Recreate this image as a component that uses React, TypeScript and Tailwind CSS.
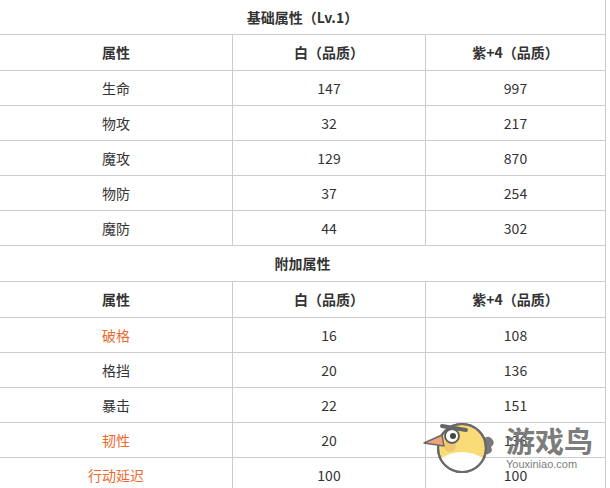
import React from "react";

type Row = { name: string; w: string; p: string; orange?: boolean };

const base: Row[] = [
  { name: "生命", w: "147", p: "997" },
  { name: "物攻", w: "32", p: "217" },
  { name: "魔攻", w: "129", p: "870" },
  { name: "物防", w: "37", p: "254" },
  { name: "魔防", w: "44", p: "302" },
];

const extra: Row[] = [
  { name: "破格", w: "16", p: "108", orange: true },
  { name: "格挡", w: "20", p: "136" },
  { name: "暴击", w: "22", p: "151" },
  { name: "韧性", w: "20", p: "136", orange: true },
  { name: "行动延迟", w: "100", p: "100", orange: true },
];

function Title({ text, h }: { text: string; h: string }) {
  return (
    <div className={`${h} border-b border-[#cccccc] flex items-center justify-center font-bold`}>
      {text}
    </div>
  );
}

function Header() {
  return (
    <div className="h-[36px] border-b border-[#cccccc] grid grid-cols-[233px_193px_1fr] font-bold">
      <div className="border-r border-[#cccccc] flex items-center justify-center">属性</div>
      <div className="border-r border-[#cccccc] flex items-center justify-center">白（品质）</div>
      <div className="flex items-center justify-center">紫+4（品质）</div>
    </div>
  );
}

function DataRow({ r }: { r: Row }) {
  return (
    <div className="h-[35px] border-b border-[#cccccc] grid grid-cols-[233px_193px_1fr]">
      <div
        className={`border-r border-[#cccccc] flex items-center justify-center ${
          r.orange ? "text-[#ec6a2c]" : ""
        }`}
      >
        {r.name}
      </div>
      <div className="border-r border-[#cccccc] flex items-center justify-center">{r.w}</div>
      <div className="flex items-center justify-center">{r.p}</div>
    </div>
  );
}

function Watermark() {
  return (
    <div className="absolute left-[420px] top-[418px] flex items-start opacity-90 pointer-events-none">
      <svg width="80" height="60" viewBox="0 0 80 60">
        {/* tail */}
        <path d="M62 22 q6 -6 10 -1 q4 4 -1 8 q3 5 -3 7 q-4 1 -7 -3 z" fill="#6a6a6a" />
        {/* body */}
        <circle cx="42" cy="30" r="24" fill="#f9d96a" stroke="#5a5a5a" strokeWidth="2.2" />
        {/* belly */}
        <path d="M21 40 q21 -12 42 0 q-6 13 -21 13 q-15 0 -21 -13 z" fill="#ffffff" />
        <circle cx="42" cy="30" r="24" fill="none" stroke="#5a5a5a" strokeWidth="2.2" />
        {/* cheek */}
        <circle cx="30" cy="28" r="6" fill="#e8b860" opacity="0.7" />
        {/* beak */}
        <path d="M22 17 L4 25 L24 28 z" fill="#f0986a" stroke="#5a5a5a" strokeWidth="1.4" strokeLinejoin="round" />
        {/* eye */}
        <circle cx="32" cy="18" r="7" fill="#ffffff" stroke="#4a4a4a" strokeWidth="1.8" />
        <circle cx="33" cy="18" r="3" fill="#333333" />
        {/* brow */}
        <path d="M22 8 L46 12" stroke="#555555" strokeWidth="4" strokeLinecap="round" />
      </svg>
      <div className="flex flex-col items-start ml-[6px] mt-[6px]">
        <div className="text-[29px] leading-[32px] font-bold text-[#6e6e6e] tracking-[0px]">游戏鸟</div>
        <div className="text-[11px] leading-[12px] text-[#707070] font-['Liberation_Sans'] mt-[2px]">
          Youxiniao.com
        </div>
      </div>
    </div>
  );
}

export default function App() {
  return (
    <div className="relative w-[610px] h-[488px] overflow-hidden bg-white text-[14px] text-[#333333] font-['Noto_Sans_CJK_SC',sans-serif]">
      <div className="w-[606px] border-r border-[#cccccc]">
        <Title text="基础属性（Lv.1）" h="h-[35px]" />
        <Header />
        {base.map((r) => (
          <DataRow key={r.name} r={r} />
        ))}
        <Title text="附加属性" h="h-[36px]" />
        <Header />
        {extra.map((r) => (
          <DataRow key={r.name} r={r} />
        ))}
      </div>
      <Watermark />
    </div>
  );
}
